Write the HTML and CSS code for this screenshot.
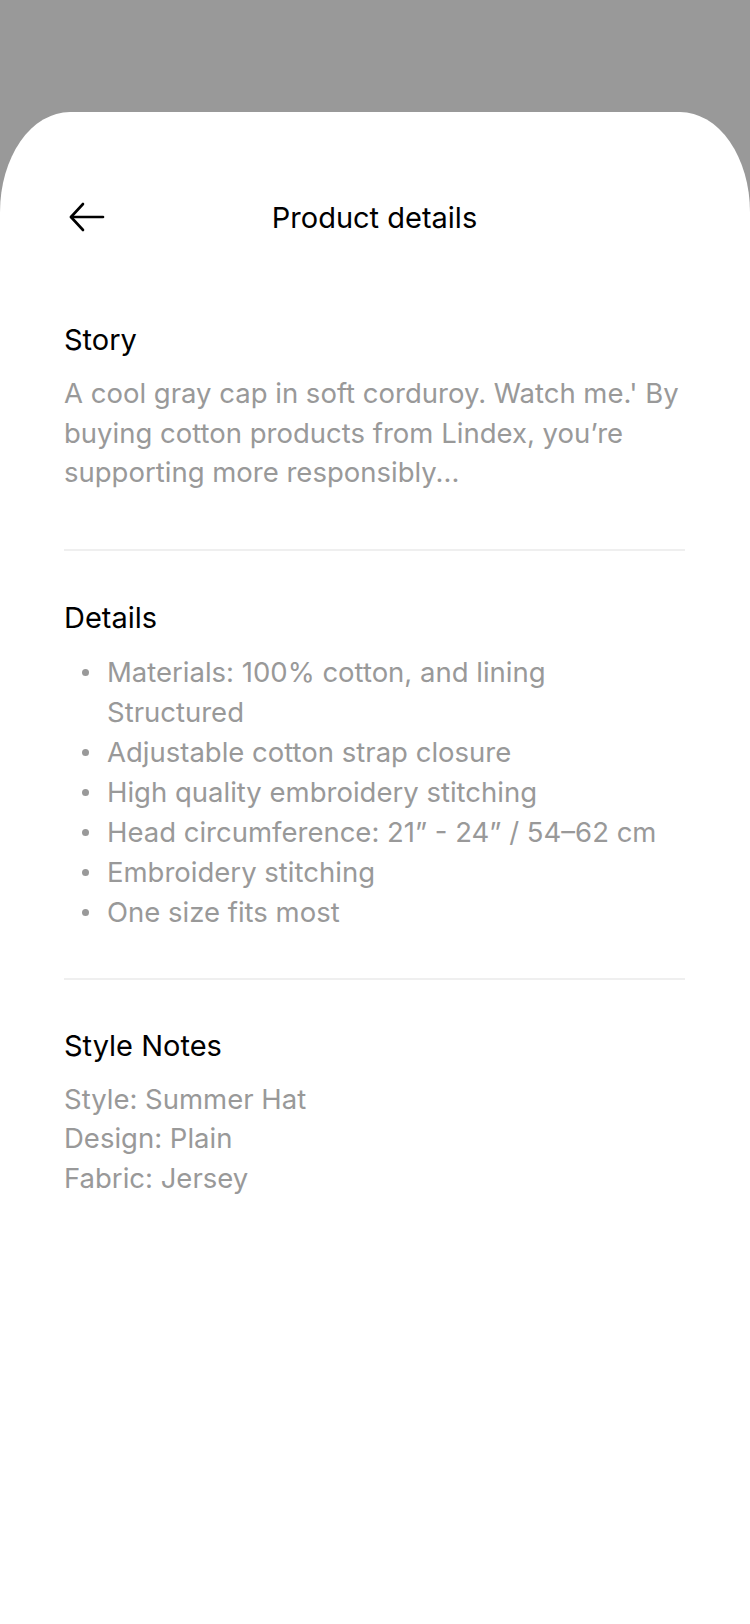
FILE: index.html
```html
<!DOCTYPE html>
<html lang="en">
<head>
<meta charset="utf-8">
<title>Product details</title>
<link rel="stylesheet" href="styles.css">
</head>
<body>
<div class="sheet">
  <header class="topbar">
    <button class="back" aria-label="Back">
      <svg width="36" height="30" viewBox="0 0 36 30" fill="none" stroke="#000" stroke-width="2.6" stroke-linecap="round" stroke-linejoin="round">
        <path d="M14 2 L2 15 L14 28"/>
        <path d="M2 15 H34"/>
      </svg>
    </button>
    <h1 class="title">Product details</h1>
    <span class="spacer"></span>
  </header>

  <section class="section story">
    <h2 class="heading">Story</h2>
    <p class="body-text">A cool gray cap in soft corduroy. Watch me.' By buying cotton products from Lindex, you’re supporting more responsibly...</p>
  </section>

  <section class="section details">
    <h2 class="heading">Details</h2>
    <ul class="bullets">
      <li>Materials: 100% cotton, and lining Structured</li>
      <li>Adjustable cotton strap closure</li>
      <li>High quality embroidery stitching</li>
      <li>Head circumference: 21” - 24” / 54–62 cm</li>
      <li>Embroidery stitching</li>
      <li>One size fits most</li>
    </ul>
  </section>

  <section class="section notes">
    <h2 class="heading">Style Notes</h2>
    <div class="body-text">
      <div>Style: Summer Hat</div>
      <div>Design: Plain</div>
      <div>Fabric: Jersey</div>
    </div>
  </section>
</div>
</body>
</html>
```
FILE: styles.css
```css
html, body {
  margin: 0;
  padding: 0;
}
body {
  background: #999999;
  font-family: Inter, "Liberation Sans", sans-serif;
  width: 750px;
  height: 1624px;
  overflow: hidden;
}
.sheet {
  margin-top: 112px;
  background: #ffffff;
  border-radius: 70px 70px 0 0 / 100px 100px 0 0;
  height: 1512px;
  padding: 77px 65px 0 64px;
  box-sizing: border-box;
}
.topbar {
  display: grid;
  grid-template-columns: 1fr auto 1fr;
  align-items: center;
  height: 56px;
}
.back {
  justify-self: start;
  background: none;
  border: 0;
  padding: 0 0 0 5px;
  margin: 0;
  display: flex;
  align-items: center;
}
.title {
  margin: 0;
  padding-top: 2px;
  font-size: 29px;
  font-weight: 400;
  color: #000;
  letter-spacing: 0;
  line-height: 40px;
}
.section {
  border-bottom: 2px solid #efefef;
}
.section.notes {
  border-bottom: 0;
}
.story {
  padding: 75px 0 56px;
}
.details {
  padding: 47px 0 46px;
}
.notes {
  padding: 46px 0 0;
}
.heading {
  margin: 0 0 14px;
  font-size: 29px;
  font-weight: 400;
  color: #000;
  letter-spacing: 0;
  line-height: 40px;
}
.body-text {
  margin: 0;
  font-size: 27.5px;
  line-height: 39.5px;
  color: #999999;
  letter-spacing: 0;
}
.bullets {
  list-style: none;
  margin: 0;
  padding: 0;
  font-size: 27.5px;
  line-height: 40px;
  color: #999999;
  letter-spacing: 0;
}
.bullets li {
  display: grid;
  grid-template-columns: 43px 1fr;
}
.bullets li::before {
  content: "";
  width: 7px;
  height: 7px;
  border-radius: 50%;
  background: #999999;
  margin: 17px 0 0 18px;
}
```
